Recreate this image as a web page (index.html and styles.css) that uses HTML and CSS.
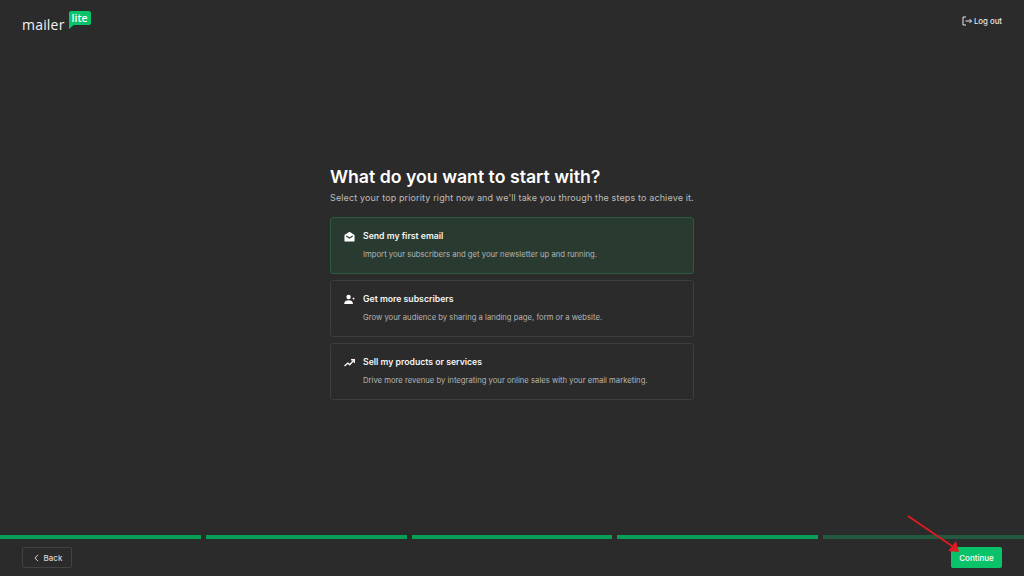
FILE: index.html
```html
<!DOCTYPE html>
<html lang="en">
<head>
    <meta charset="UTF-8">
    <meta name="viewport" content="width=device-width, initial-scale=1.0">
    <title>MailerLite - What do you want to start with?</title>
    <link rel="stylesheet" href="styles.css">
</head>
<body>
    <header class="topbar">
        <div class="logo">
            <span class="logo-word">mailer</span>
            <span class="logo-badge">lite<svg class="logo-tail" width="6" height="5" viewBox="0 0 6 5"><path d="M0 0h6L0 5z" fill="#09c269"/></svg></span>
        </div>
        <a class="logout" href="#">
            <svg width="10" height="10" viewBox="0 0 10 10" fill="none" stroke="#e8e8e8" stroke-width="1"><path d="M4 1H1v8h3"/><path d="M3.5 5h6M7.500 3l2 2-2 2"/></svg>
            Log out
        </a>
    </header>

    <main class="content">
        <h1 class="title">What do you want to start with?</h1>
        <p class="subtitle">Select your top priority right now and we'll take you through the steps to achieve it.</p>

        <div class="option selected">
            <svg class="option-icon" width="11" height="11" viewBox="0 0 12 12"><path d="M6 .8 11.500 4.300V10.500a1 1 0 0 1-1 1h-9a1 1 0 0 1-1-1V4.300z" fill="#fff"/><path d="M2.500 5.500 6 7.700 9.500 5.500" fill="none" stroke="#29392f" stroke-width="1.200"/></svg>
            <div>
                <h3 class="option-title">Send my first email</h3>
                <p class="option-text">Import your subscribers and get your newsletter up and running.</p>
            </div>
        </div>
        <div class="option">
            <svg class="option-icon" width="11" height="11" viewBox="0 0 12 12" fill="#fff"><circle cx="5" cy="3.200" r="2.400"/><path d="M.2 10.800C.2 8 2.400 6.900 5 6.900s4.800 1.100 4.800 3.900z"/><path d="M10.400 3.800v2.400M9.200 5h2.400" stroke="#fff" stroke-width=".8"/></svg>
            <div>
                <h3 class="option-title">Get more subscribers</h3>
                <p class="option-text">Grow your audience by sharing a landing page, form or a website.</p>
            </div>
        </div>
        <div class="option">
            <svg class="option-icon" width="11" height="11" viewBox="0 0 12 12" fill="none" stroke="#fff" stroke-width="1.500"><path d="M.6 9.800 4.200 6.600l2 1.800L10.800 3.400"/><path d="M7.700 3h3.500v3.500"/></svg>
            <div>
                <h3 class="option-title">Sell my products or services</h3>
                <p class="option-text">Drive more revenue by integrating your online sales with your email marketing.</p>
            </div>
        </div>
    </main>

    <div class="progress">
        <div class="step done"></div>
        <div class="step done"></div>
        <div class="step done"></div>
        <div class="step done"></div>
        <div class="step"></div>
    </div>

    <footer class="actions">
        <button class="button back">
            <svg width="5" height="8" viewBox="0 0 5 8" fill="none" stroke="#d5d5d5" stroke-width="1"><path d="M4 .8.900 4 4 7.200"/></svg>
            Back
        </button>
        <button class="button continue">Continue</button>
    </footer>

    <svg class="arrow" width="60" height="42" viewBox="0 0 60 42">
        <path d="M1 1 45 31" stroke="#e01a1f" stroke-width="1.800"/>
        <path d="M52 37 41 36 49 26z" fill="#e01a1f"/>
    </svg>
</body>
</html>
```

FILE: styles.css
```css
* {
    box-sizing: border-box;
}
body {
    margin: 0;
    height: 100vh;
    overflow: hidden;
    position: relative;
    display: flex;
    flex-direction: column;
    background: #2b2b2b;
    color: #fff;
    font-family: Inter, "Liberation Sans", sans-serif;
}
.topbar {
    height: 42px;
    padding: 11px 22px 0;
    display: flex;
    justify-content: space-between;
    align-items: flex-start;
}
.logo {
    display: flex;
    align-items: flex-start;
    gap: 4px;
}
.logo-word {
    font-family: "Open Sans", sans-serif;
    font-size: 14px;
    font-weight: 500;
    line-height: 21px;
    margin-top: 3px;
    letter-spacing: 0.2px;
    color: #f2f2f2;
}
.logo-badge {
    position: relative;
    width: 22px;
    height: 14px;
    background: #09c269;
    border-radius: 2px;
    font-family: "Open Sans", sans-serif;
    font-size: 10.500px;
    font-weight: 600;
    line-height: 14px;
    text-align: center;
    color: #fff;
}
.logo-tail {
    position: absolute;
    left: 0;
    top: 13px;
}
.logout {
    display: flex;
    align-items: center;
    gap: 2px;
    margin: 5px 0 0;
    font-size: 7.800px;
    font-weight: 500;
    line-height: 10px;
    color: #e8e8e8;
    text-decoration: none;
}
.content {
    flex: 1;
    width: 364px;
    margin: 0 auto;
    padding-top: 123px;
}
.title {
    margin: 0;
    font-size: 17.700px;
    font-weight: 600;
    line-height: 23px;
    white-space: nowrap;
}
.subtitle {
    margin: 3px 0 12px;
    font-size: 9px;
    line-height: 14px;
    letter-spacing: 0.13px;
    white-space: nowrap;
    color: #bdbdbd;
}
.option {
    display: flex;
    gap: 8px;
    height: 57px;
    margin-bottom: 6px;
    padding: 12px 12px 0 13px;
    border: 1px solid #3d3d3d;
    border-radius: 3px;
}
.option.selected {
    background: #293b31;
    border-color: #2b5a40;
}
.option-icon {
    flex: none;
    margin-top: 1px;
}
.option-title {
    margin: 0;
    font-size: 8.700px;
    font-weight: 600;
    line-height: 12px;
    color: #f4f4f4;
}
.option-text {
    margin: 7px 0 0;
    font-size: 7.700px;
    line-height: 11px;
    color: #b4b4b4;
}
.progress {
    display: flex;
    gap: 5px;
}
.step {
    flex: 1;
    height: 4px;
    background: #235a3f;
}
.step.done {
    background: #0a9f56;
}
.actions {
    height: 37px;
    padding: 8px 22px 0;
    display: flex;
    justify-content: space-between;
    align-items: flex-start;
}
.button {
    height: 21px;
    border-radius: 2px;
    font-family: Inter, sans-serif;
    font-size: 8px;
    font-weight: 500;
}
.back {
    width: 50px;
    padding: 0 0 0 2px;
    display: flex;
    align-items: center;
    justify-content: center;
    gap: 5px;
    background: transparent;
    border: 1px solid #424242;
    color: #d5d5d5;
}
.continue {
    width: 51px;
    padding: 0;
    background: #09c269;
    border: none;
    color: #fff;
}
.arrow {
    position: absolute;
    left: 907px;
    top: 515px;
}
```
